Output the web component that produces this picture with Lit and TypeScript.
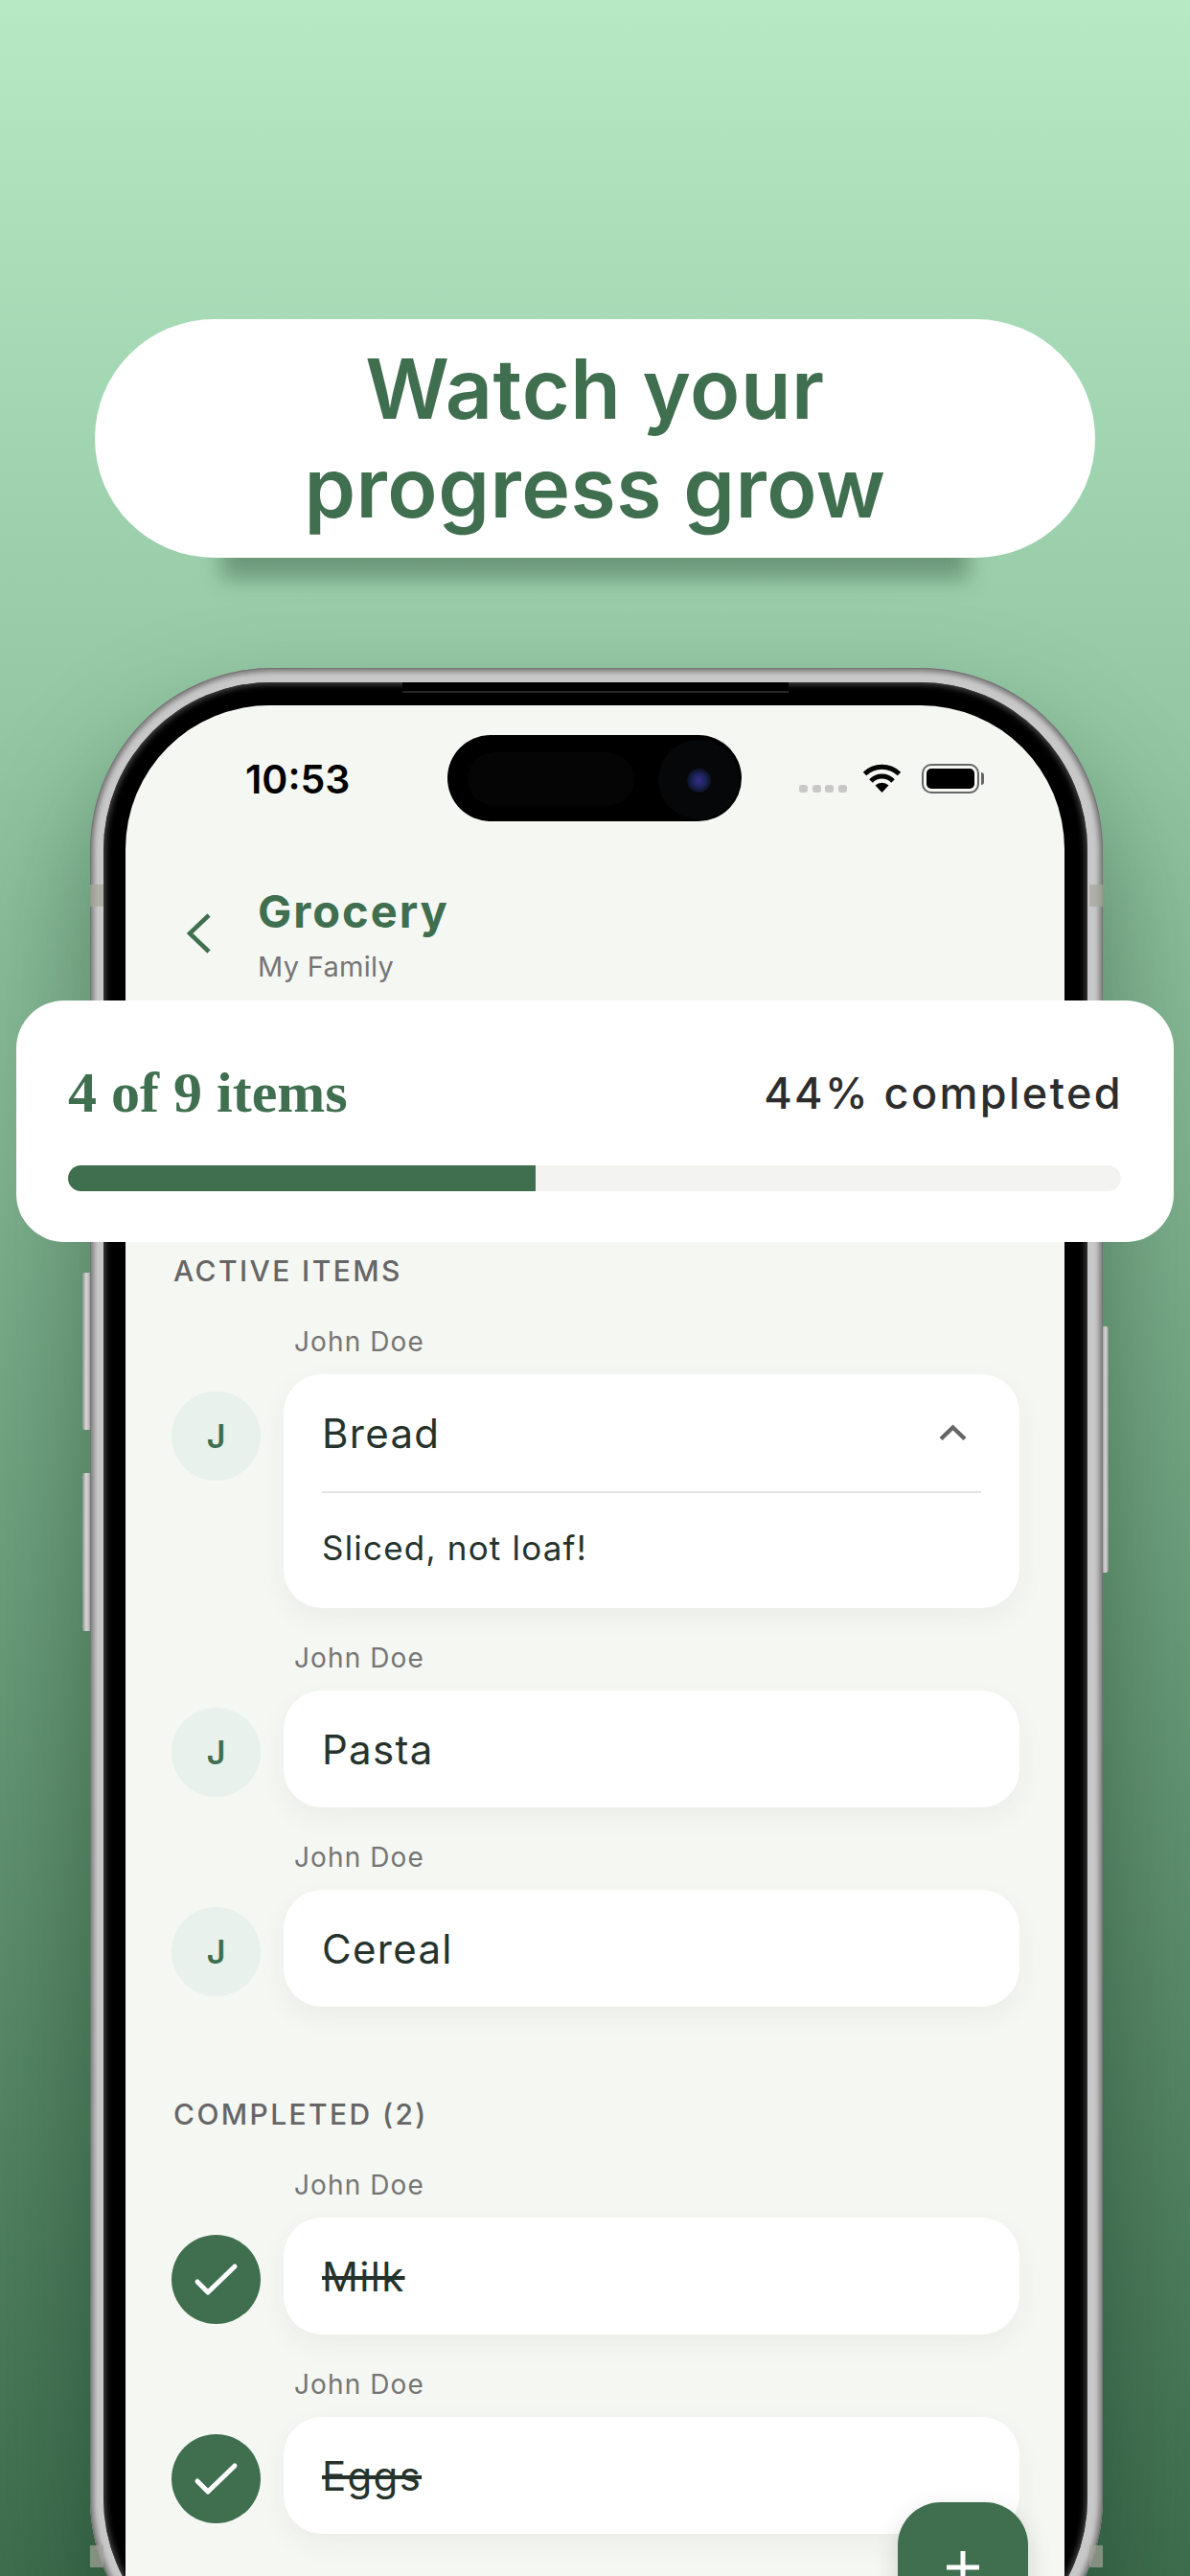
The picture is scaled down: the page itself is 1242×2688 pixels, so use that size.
import { LitElement, html, css } from "lit";
import { customElement } from "lit/decorators.js";

interface Item { name: string; note?: string; done?: boolean }

const active: Item[] = [
  { name: "Bread", note: "Sliced, not loaf!" },
  { name: "Pasta" },
  { name: "Cereal" },
];
const completed: Item[] = [
  { name: "Milk", done: true },
  { name: "Eggs", done: true },
];
const doneCount = 4;
const total = 9;

@customElement("app-root")
export class AppRoot extends LitElement {
  static styles = css`
    :host {
      display: block;
      position: relative;
      isolation: isolate;
      width: 1242px;
      height: 2688px;
      overflow: hidden;
      background: linear-gradient(180deg, #b5eac5 0%, #3f6f4f 100%);
      font-family: Inter, "Liberation Sans", sans-serif;
    }
    .pill {
      position: relative;
      margin: 333px 99px 0;
      height: 249px;
      border-radius: 125px;
      background: #fff;
      display: flex;
      flex-direction: column;
      align-items: center;
      justify-content: center;
      color: #3f6f4f;
      font-weight: 600;
      font-size: 86px;
      line-height: 103px;
      letter-spacing: 0.5px;
    }
    .pill::before {
      content: "";
      position: absolute;
      z-index: -1;
      left: 132px;
      right: 132px;
      top: 180px;
      bottom: -22px;
      background: rgba(30, 60, 40, 0.38);
      filter: blur(11px);
    }
    .phone {
      position: relative;
      margin: 115px 0 0 94px;
      width: 1057px;
      height: 2100px;
      box-sizing: border-box;
      padding: 15px 16px 15px 14px;
      border-radius: 190px;
      background: #c8c8c8;
      box-shadow: inset 0 0 0 1px #747474, inset 0 0 5px 4px #7e7e7e, 0 70px 130px rgba(10, 40, 20, 0.42);
    }
    .band {
      position: absolute;
      width: 14px;
      height: 23px;
      background: rgba(165, 165, 155, 0.7);
    }
    .band.l { left: 0; }
    .band.r { right: 0; }
    .btn {
      position: absolute;
      width: 8px;
      border-radius: 3px 0 0 3px;
      background: linear-gradient(90deg, #8f8f8f, #d8d8d8 50%, #a8a8a8);
    }
    .btn.right { border-radius: 0 3px 3px 0; background: linear-gradient(270deg, #8f8f8f, #d8d8d8 50%, #a8a8a8); }
    .bezel {
      position: relative;
      height: 100%;
      box-sizing: border-box;
      padding: 24px 24px 24px 23px;
      border-radius: 175px;
      background: #000;
      box-shadow: inset 0 0 6px 2px #4a4a4a;
    }
    .speaker {
      position: absolute;
      left: 312px;
      right: 312px;
      top: 0;
      height: 9px;
      background: #000;
      border-bottom: 2px solid #262626;
    }
    .screen {
      position: relative;
      height: 100%;
      overflow: hidden;
      border-radius: 150px 150px 0 0;
      background: #f5f7f2;
    }
    .status {
      display: flex;
      align-items: center;
      height: 90px;
      padding: 31px 0 0 125px;
    }
    .time {
      width: 110px;
      font-size: 41px;
      font-weight: 600;
      color: #000;
      line-height: 50px;
      margin-top: 2px;
    }
    .island {
      position: relative;
      margin-left: 101px;
      width: 307px;
      height: 90px;
      border-radius: 45px;
      background: #000;
    }
    .sensor {
      position: absolute;
      left: 21px;
      top: 18px;
      width: 174px;
      height: 56px;
      border-radius: 28px;
      background: #050505;
    }
    .cam {
      position: absolute;
      left: 220px;
      top: 5px;
      width: 84px;
      height: 83px;
      border-radius: 50%;
      background: #060709;
    }
    .lens {
      position: absolute;
      left: 250px;
      top: 35px;
      width: 25px;
      height: 25px;
      border-radius: 50%;
      background: radial-gradient(circle at 50% 50%, #3b2a8a 0%, #1b2457 40%, #0a1020 72%, #07080a 100%);
    }
    .icons {
      margin-left: 60px;
      display: flex;
      align-items: center;
      height: 31px;
    }
    .dots { display: flex; gap: 4.5px; align-self: flex-end; margin: 0 16.5px 1px 0; }
    .dot { width: 9px; height: 8px; border-radius: 3px; background: #c8c8c6; }
    .wifi { width: 41px; height: 30px; display: block; margin-right: 20.5px; }
    .battery {
      position: relative;
      box-sizing: border-box;
      width: 60px;
      height: 31px;
      border: 2px solid #666;
      border-radius: 10px;
      padding: 3px;
    }
    .battery i { display: block; height: 100%; border-radius: 5px; background: #000; }
    .battery::after {
      content: "";
      position: absolute;
      right: -7px;
      top: 7px;
      width: 3px;
      height: 13px;
      border-radius: 0 3px 3px 0;
      background: #666;
    }
    .head {
      display: flex;
      align-items: center;
      margin-top: 66px;
      padding-left: 64px;
      gap: 49px;
    }
    .back { width: 25px; height: 42px; display: block; margin-top: -4px; }
    .title {
      font-size: 47px;
      font-weight: 700;
      line-height: 56px;
      letter-spacing: 2px;
      color: #3f6f4f;
    }
    .sub {
      margin-top: 10px;
      font-size: 29px;
      line-height: 40px;
      letter-spacing: 0.3px;
      color: #757575;
    }
    .list {
      padding: 277px 47px 0 48px;
      display: flex;
      flex-direction: column;
    }
    .label {
      font-size: 30px;
      font-weight: 500;
      line-height: 40px;
      letter-spacing: 2.4px;
      color: #666;
      margin: 0 0 34px 2px;
    }
    .label.second { margin-top: 60px; }
    .item { margin-bottom: 32px; }
    .author {
      margin: 0 0 14px 128px;
      font-size: 28px;
      line-height: 40px;
      letter-spacing: 1.1px;
      color: #757575;
    }
    .row {
      display: grid;
      grid-template-columns: 93px 1fr;
      column-gap: 24px;
      align-items: start;
    }
    .avatar {
      width: 93px;
      height: 93px;
      margin-top: 18px;
      border-radius: 50%;
      background: #e8f1ec;
      color: #3f6f4f;
      display: flex;
      align-items: center;
      justify-content: center;
      font-size: 34px;
      font-weight: 600;
    }
    .avatar.check { background: #3f6f4f; }
    .avatar svg { display: block; width: 93px; height: 93px; }
    .card {
      background: #fff;
      border-radius: 40px;
      padding: 0 40px;
      box-shadow: 0 10px 30px rgba(60, 70, 60, 0.05);
    }
    .line {
      display: flex;
      align-items: center;
      justify-content: space-between;
      height: 122px;
      font-size: 42px;
      letter-spacing: 1.3px;
      color: #25332c;
    }
    .line s { text-decoration: line-through; }
    .open .line { border-bottom: 2px solid #e2e3e2; }
    .chev { width: 30px; height: 18px; display: block; margin-right: 14px; }
    .note {
      height: 113px;
      padding-bottom: 7px;
      display: flex;
      align-items: center;
      font-size: 35px;
      letter-spacing: 1.2px;
      color: #25332c;
    }
    .fab {
      position: absolute;
      left: 806px;
      top: 1875px;
      width: 136px;
      height: 136px;
      border-radius: 45px;
      background: #3f6f4f;
      box-shadow: 0 8px 24px rgba(40, 50, 40, 0.18);
    }
    .fab svg { display: block; width: 136px; height: 136px; }
    .progress {
      position: absolute;
      left: 17px;
      top: 1044px;
      width: 1208px;
      height: 252px;
      box-sizing: border-box;
      padding: 64px 55px 0 54px;
      border-radius: 50px;
      background: #fff;
    }
    .pr-top {
      display: flex;
      justify-content: space-between;
      align-items: center;
      height: 64px;
    }
    .count {
      font-family: "Liberation Serif", serif;
      font-size: 60px;
      font-weight: 700;
      color: #3f6f4f;
    }
    .pct {
      margin-right: -2px;
      font-size: 45px;
      font-weight: 500;
      letter-spacing: 2.4px;
      color: #2d2d2d;
    }
    .track {
      margin-top: 44px;
      height: 27px;
      border-radius: 13.5px;
      overflow: hidden;
      background: #f3f4f2;
    }
    .fill { height: 100%; background: #3f6f4f; }
  `;

  private avatar(done?: boolean) {
    if (done) {
      return html`<div class="avatar check">
        <svg viewBox="0 0 93 93" fill="none">
          <path d="M27 49 L38 60 L66 33" stroke="#fff" stroke-width="5" stroke-linecap="round" stroke-linejoin="round"></path>
        </svg>
      </div>`;
    }
    return html`<div class="avatar">J</div>`;
  }

  private item(it: Item) {
    return html`<div class="item">
      <div class="author">John Doe</div>
      <div class="row">
        ${this.avatar(it.done)}
        <div class="card ${it.note ? "open" : ""}">
          <div class="line">
            ${it.done ? html`<s>${it.name}</s>` : html`<span>${it.name}</span>`}
            ${it.note
              ? html`<svg class="chev" viewBox="0 0 30 18" fill="none">
                  <path d="M2 15.5 L14.5 3.5 L27 15.5" stroke="#666" stroke-width="4.5"></path>
                </svg>`
              : ""}
          </div>
          ${it.note ? html`<div class="note">${it.note}</div>` : ""}
        </div>
      </div>
    </div>`;
  }

  render() {
    const pct = (doneCount / total) * 100;
    return html`
      <div class="pill"><div>Watch your</div><div>progress grow</div></div>
      <div class="phone">
        <div class="btn" style="left:-8px;top:631px;height:164px"></div>
        <div class="btn" style="left:-8px;top:840px;height:165px"></div>
        <div class="btn right" style="right:-6px;width:6px;top:687px;height:257px"></div>
        <div class="band l" style="top:226px"></div>
        <div class="band r" style="top:226px"></div>
        <div class="band l" style="top:1959px"></div>
        <div class="band r" style="top:1959px"></div>
        <div class="bezel">
          <div class="speaker"></div>
          <div class="screen">
            <div class="status">
              <div class="time">10:53</div>
              <div class="island">
                <div class="sensor"></div>
                <div class="cam"></div>
                <div class="lens"></div>
              </div>
              <div class="icons">
                <div class="dots"><div class="dot"></div><div class="dot"></div><div class="dot"></div><div class="dot"></div></div>
                <svg class="wifi" viewBox="0 0 41 30" fill="none">
                  <path d="M2.5 10.5 A26 26 0 0 1 38.5 10.5" stroke="#000" stroke-width="5"></path>
                  <path d="M9 18 A16 16 0 0 1 32 18" stroke="#000" stroke-width="5"></path>
                  <path d="M20.5 30 L13.5 22.5 A10 10 0 0 1 27.5 22.5 Z" fill="#000"></path>
                </svg>
                <div class="battery"><i></i></div>
              </div>
            </div>
            <div class="head">
              <svg class="back" viewBox="0 0 25 42" fill="none">
                <path d="M23 2 L3 21 L23 40" stroke="#3f6f4f" stroke-width="4.5"></path>
              </svg>
              <div>
                <div class="title">Grocery</div>
                <div class="sub">My Family</div>
              </div>
            </div>
            <div class="list">
              <div class="label">ACTIVE ITEMS</div>
              ${active.map((i) => this.item(i))}
              <div class="label second">COMPLETED (2)</div>
              ${completed.map((i) => this.item(i))}
            </div>
            <div class="fab">
              <svg viewBox="0 0 136 136" fill="none">
                <path d="M68 51 V85 M51 68 H85" stroke="#fff" stroke-width="5"></path>
              </svg>
            </div>
          </div>
        </div>
      </div>
      <div class="progress">
        <div class="pr-top">
          <div class="count">${doneCount} of ${total} items</div>
          <div class="pct">${Math.floor(pct)}% completed</div>
        </div>
        <div class="track"><div class="fill" style="width:${pct}%"></div></div>
      </div>
    `;
  }
}
